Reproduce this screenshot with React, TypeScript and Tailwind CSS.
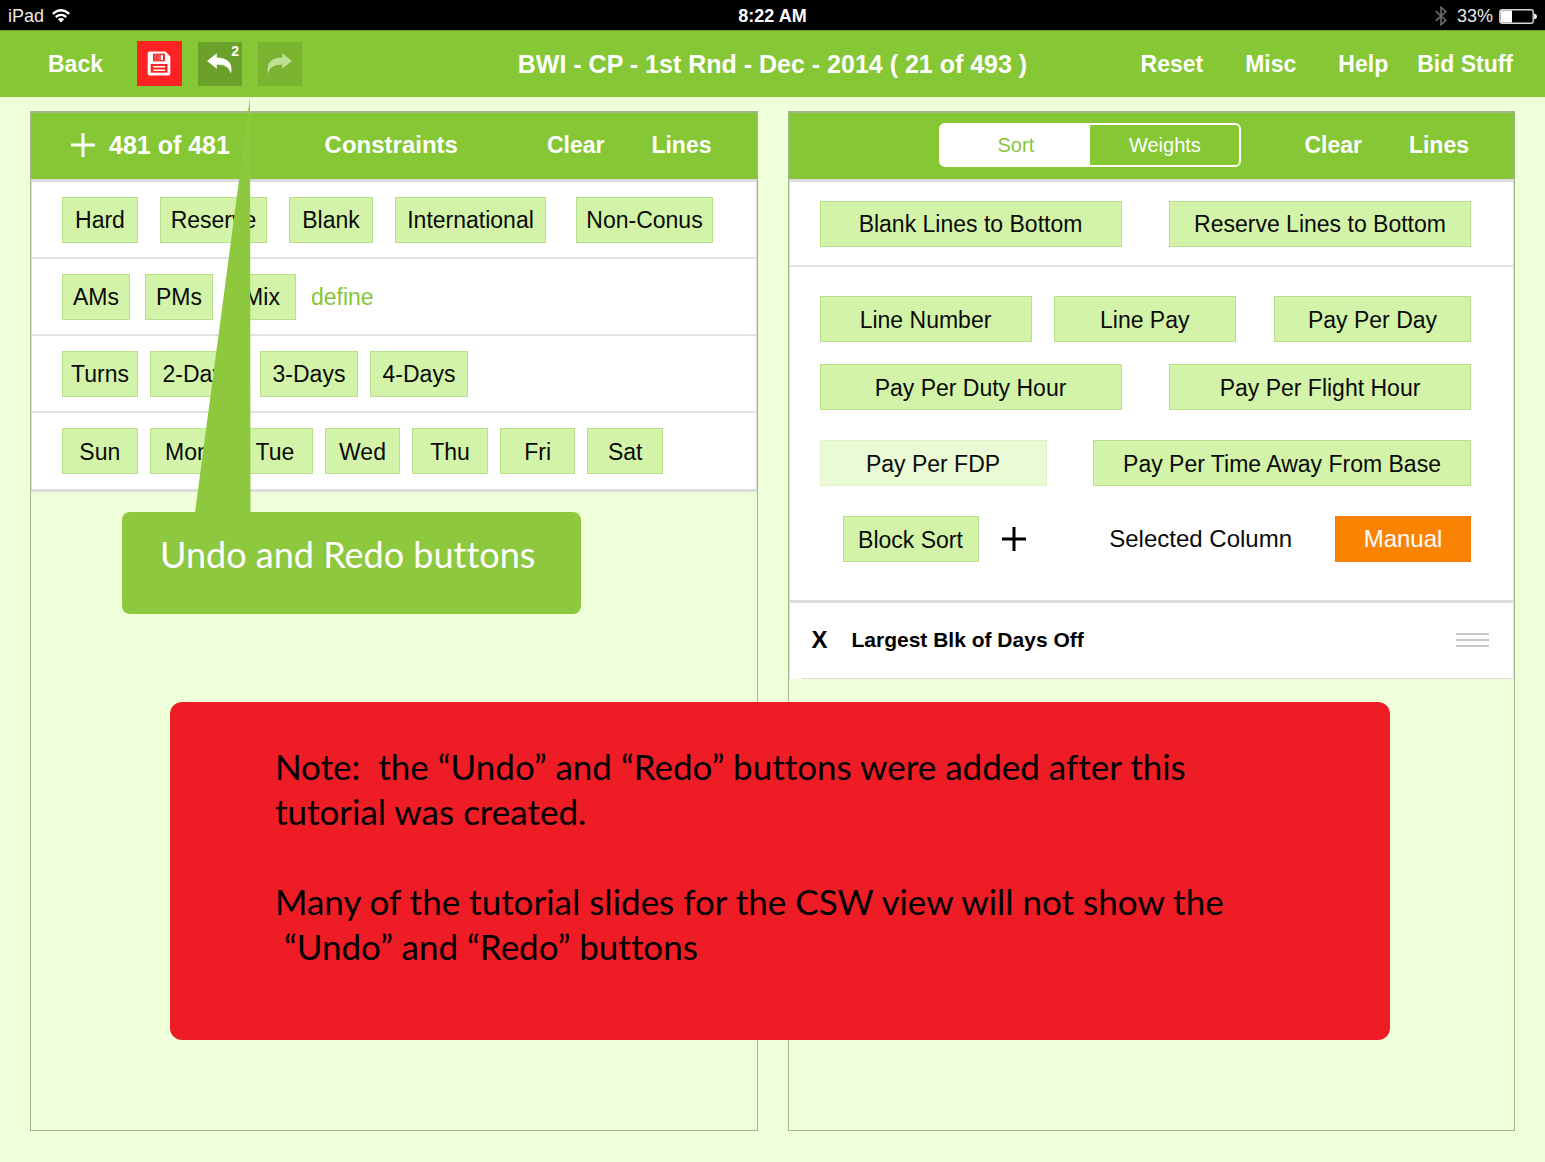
import React from "react";

const helv = "font-['Liberation_Sans',Arial,sans-serif]";

function Chip({ children, className = "" }: { children: React.ReactNode; className?: string }) {
  return (
    <button
      type="button"
      className={`h-[46px] shrink-0 whitespace-nowrap border border-[#b9df8d] bg-[#d3f4a8] pt-0.5 text-center text-[23px] leading-none text-[#0a0a0a] ${className}`}
    >
      {children}
    </button>
  );
}

function TextButton({ children, className = "" }: { children: React.ReactNode; className?: string }) {
  return (
    <button type="button" className={`whitespace-nowrap text-[23px] font-bold leading-7 text-white ${className}`}>
      {children}
    </button>
  );
}

function Plus({ className = "" }: { className?: string }) {
  return (
    <svg viewBox="0 0 24 24" className={`size-6 ${className}`} stroke="currentColor" strokeWidth="3" fill="none" aria-hidden="true">
      <path d="M12 0V24M0 12H24" />
    </svg>
  );
}

function StatusBar() {
  return (
    <div className="grid h-[30px] grid-cols-3 items-center bg-black px-2 pt-0.5 text-lg leading-none text-[#e8e8e8]">
      <div className="flex items-center gap-2">
        <span>iPad</span>
        <svg viewBox="0 0 18 14" className="h-3.5 w-[18px]" fill="none" stroke="#fff" aria-hidden="true">
          <path d="M.8 4.8Q9-2.2 17.2 4.8" strokeWidth="2.4" />
          <path d="M3.7 8Q9 3.7 14.3 8" strokeWidth="2.3" />
          <path d="M5.8 10.3Q9 7.7 12.2 10.3L9 13.6Z" fill="#fff" stroke="none" />
        </svg>
      </div>
      <div className="text-center font-bold text-white">8:22 AM</div>
      <div className="flex items-center justify-end gap-1.5">
        <svg viewBox="0 0 12 20" className="mr-1 h-5 w-3" fill="none" stroke="#6b6b6b" strokeWidth="1.6" aria-hidden="true">
          <path d="M.8 5.2 10.8 14.4 6 18.8V1.2L10.8 5.6.8 14.8" />
        </svg>
        <span>33%</span>
        <svg viewBox="0 0 38 15" className="h-[15px] w-[38px]" aria-hidden="true">
          <rect x=".8" y=".8" width="33.4" height="13.4" rx="2" fill="none" stroke="#d8d8d8" strokeWidth="1.4" />
          <rect x="1.5" y="1.5" width="11.5" height="12" fill="#fff" />
          <path d="M35.2 4.5Q38 5.2 38 7.5T35.2 10.5Z" fill="#fff" />
        </svg>
      </div>
    </div>
  );
}

function SaveIcon() {
  return (
    <svg viewBox="0 0 24 25" className="h-[25px] w-6" aria-hidden="true">
      <path d="M2.500.5H18.500L23.300 5.500V22.500a2 2 0 0 1-2 2H2.700a2 2 0 0 1-2-2V2.500a2 2 0 0 1 1.800-2Z" fill="#fff" />
      <rect x="6.700" y="3.300" width="10.600" height="6.400" fill="none" stroke="#ff2222" strokeWidth="1.300" />
      <rect x="7" y="3.500" width="5.500" height="6" fill="#f04a4a" />
      <rect x="12.500" y="3.500" width="1.200" height="6" fill="#ff2222" />
      <rect x="16" y="3.500" width="1.200" height="6" fill="#ff2222" />
      <rect x="3.700" y="13" width="16.800" height="8.700" fill="#ff2222" />
      <path d="M6.300 15.700H18M6.300 19.200H18" stroke="#fff" strokeWidth="1.500" />
    </svg>
  );
}

function ArrowIcon({ className = "" }: { className?: string }) {
  return (
    <svg viewBox="0 0 25 21" className={`h-[21px] w-[25px] ${className}`} fill="currentColor" aria-hidden="true">
      <path d="M0 8 9.8.2V4.6C18.5 4.6 24.5 8.6 24.5 16.2c0 1.6-.3 3-.9 4.6C23 14.500 17.500 11.500 9.800 11.500V15.800Z" />
    </svg>
  );
}

function NavBar() {
  return (
    <nav className="grid h-[67px] grid-cols-[1fr_auto_1fr] items-center border-t border-[#6a9e28] bg-[#86c735] px-8 pb-px">
      <div className="flex items-center pl-4">
        <TextButton>Back</TextButton>
        <button type="button" aria-label="Save" className="ml-[34px] flex size-[45px] items-center justify-center bg-[#ff2222]">
          <SaveIcon />
        </button>
        <button type="button" aria-label="Undo" className="relative ml-4 flex size-11 items-center justify-center bg-[#6ba12b] text-white">
          <ArrowIcon />
          <span className="absolute right-[3px] top-0.5 text-sm font-bold leading-none">2</span>
        </button>
        <button type="button" aria-label="Redo" disabled className="ml-4 flex size-11 items-center justify-center bg-[#7ab431] text-[#bfe094]">
          <ArrowIcon className="-scale-x-100" />
        </button>
      </div>
      <h1 className="whitespace-nowrap text-[25px] font-bold leading-7 text-white">BWI - CP - 1st Rnd - Dec - 2014 ( 21 of 493 )</h1>
      <div className="flex items-center justify-end">
        <TextButton>Reset</TextButton>
        <TextButton className="ml-[42px]">Misc</TextButton>
        <TextButton className="ml-[42px]">Help</TextButton>
        <TextButton className="ml-[29px]">Bid Stuff</TextButton>
      </div>
    </nav>
  );
}

const panel = "flex min-w-0 flex-1 flex-col border border-t-2 border-[#a3b78c]";
const panelHead = "h-[66px] items-center bg-[#86c735] pb-0.5 pr-[45px]";
const row = "flex h-[77px] items-center border-b-2 border-[#e2e2e2] pl-[30px]";

function ConstraintsPanel() {
  return (
    <section className={panel}>
      <header className={`${panelHead} grid grid-cols-[1fr_auto_1fr] pl-10 text-white`}>
        <div className="flex items-center gap-3.5">
          <button type="button" aria-label="Add constraint"><Plus className="block" /></button>
          <span className="text-[25px] font-bold leading-7">481 of 481</span>
        </div>
        <h2 className="text-2xl font-bold leading-7">Constraints</h2>
        <div className="flex justify-end gap-[47px]">
          <TextButton>Clear</TextButton>
          <TextButton>Lines</TextButton>
        </div>
      </header>
      <div className="border-x border-y-[3px] border-[#dcdcdc] bg-white">
        <div className={row}>
          <Chip className="w-[76px]">Hard</Chip>
          <Chip className="ml-[22px] w-[107px]">Reserve</Chip>
          <Chip className="ml-[22px] w-[84px]">Blank</Chip>
          <Chip className="ml-[22px] w-[151px]">International</Chip>
          <Chip className="ml-[30px] w-[137px]">Non-Conus</Chip>
        </div>
        <div className={`${row} gap-[15px]`}>
          <Chip className="w-[68px]">AMs</Chip>
          <Chip className="w-[68px]">PMs</Chip>
          <Chip className="w-[68px]">Mix</Chip>
          <a href="#define" className="pt-0.5 text-[23px] leading-none text-[#86c735]">define</a>
        </div>
        <div className={`${row} gap-3`}>
          <Chip className="w-[76px]">Turns</Chip>
          <Chip className="w-[98px]">2-Days</Chip>
          <Chip className="w-[98px]">3-Days</Chip>
          <Chip className="w-[98px]">4-Days</Chip>
        </div>
        <div className="flex h-[76px] items-center pl-[30px]">
          <div className="grid w-[601px] grid-cols-7 gap-3">
            {["Sun", "Mon", "Tue", "Wed", "Thu", "Fri", "Sat"].map((d) => (
              <Chip key={d}>{d}</Chip>
            ))}
          </div>
        </div>
      </div>
    </section>
  );
}

function SortPanel() {
  return (
    <section className={panel}>
      <header className={`${panelHead} flex justify-end`}>
        <div className="flex h-11 w-[302px] overflow-hidden rounded-md border-2 border-white text-xl leading-none" role="group" aria-label="View">
          <button type="button" className="flex-1 bg-white text-[#86c735]">Sort</button>
          <button type="button" className="flex-1 bg-[#86c735] text-white">Weights</button>
        </div>
        <TextButton className="ml-[63px]">Clear</TextButton>
        <TextButton className="ml-[47px]">Lines</TextButton>
      </header>
      <div className="border-x border-t-[3px] border-[#dcdcdc] bg-white">
        <div className="flex h-[85px] items-center justify-between border-b-2 border-[#e2e2e2] pl-[30px] pr-[42px]">
          <Chip className="w-[302px]">Blank Lines to Bottom</Chip>
          <Chip className="w-[302px]">Reserve Lines to Bottom</Chip>
        </div>
        <div className="border-b-[3px] border-[#dcdcdc] pb-[38px] pl-[30px] pr-[42px] pt-[29px]">
          <div className="flex justify-between">
            <Chip className="w-[212px]">Line Number</Chip>
            <Chip className="-ml-4 w-[182px]">Line Pay</Chip>
            <Chip className="w-[197px]">Pay Per Day</Chip>
          </div>
          <div className="mt-[22px] flex justify-between">
            <Chip className="w-[302px]">Pay Per Duty Hour</Chip>
            <Chip className="w-[302px]">Pay Per Flight Hour</Chip>
          </div>
          <div className="mt-[30px] flex justify-between">
            <button type="button" disabled className="h-[46px] w-[227px] border border-[#ddf3c4] bg-[#e9fad4] pt-0.5 text-[23px] leading-none text-[#0a0a0a]">
              Pay Per FDP
            </button>
            <Chip className="w-[378px]">Pay Per Time Away From Base</Chip>
          </div>
          <div className="mt-[30px] flex items-center pl-[23px]">
            <Chip className="w-[136px]">Block Sort</Chip>
            <button type="button" aria-label="Add block sort" className="ml-[23px] text-black"><Plus className="block" /></button>
            <span className="ml-auto mr-[43px] text-2xl leading-none text-[#0a0a0a]">Selected Column</span>
            <button type="button" className="h-[46px] w-[136px] border border-[#f57c0a] bg-[#fb8304] text-2xl leading-none text-white">Manual</button>
          </div>
        </div>
        <div className="flex h-[75px] items-center pb-0.5 pl-[22px] pr-6">
          <button type="button" aria-label="Remove" className="w-4 text-2xl font-bold leading-none text-black">X</button>
          <span className="ml-6 text-[21px] font-bold leading-none text-black">Largest Blk of Days Off</span>
          <svg viewBox="0 0 33 14" className="ml-auto h-3.5 w-[33px]" stroke="#c7c7cc" strokeWidth="2" aria-hidden="true">
            <path d="M0 1H33M0 7H33M0 13H33" />
          </svg>
        </div>
        <div className="ml-3 h-px bg-[#dcdcdc]" />
      </div>
    </section>
  );
}

function UndoRedoCallout() {
  return (
    <aside className="absolute left-[122px] top-[97px] w-[459px] font-[Lato,sans-serif]">
      <svg viewBox="0 0 459 416" className="block h-[416px] w-[459px]" fill="#8dc83f" aria-hidden="true">
        <path d="M128 0 128.500 416H73Z" />
      </svg>
      <div className="-mt-px h-[102px] rounded-lg bg-[#8dc83f] pl-[38px] pt-[18px] text-4xl leading-[48px] text-white [font-variant-ligatures:none]">
        Undo and Redo buttons
      </div>
    </aside>
  );
}

function Note() {
  return (
    <aside className="absolute left-[11%] top-[702px] w-[79%] whitespace-pre rounded-xl bg-[#ee1c25] pb-[71px] pl-[105px] pt-[42px] font-[Lato,sans-serif] text-[35px] leading-[45px] text-black [font-variant-ligatures:none]">
      <p>Note:  the “Undo” and “Redo” buttons were added after this{"\n"}tutorial was created.</p>
      <p className="mt-[45px]">Many of the tutorial slides for the CSW view will not show the{"\n"} “Undo” and “Redo” buttons</p>
    </aside>
  );
}

export default function App() {
  return (
    <div className={`relative flex min-h-screen flex-col bg-[#eeffd9] ${helv}`}>
      <StatusBar />
      <NavBar />
      <main className="flex flex-1 gap-[30px] px-[30px] pb-[31px] pt-3.5">
        <ConstraintsPanel />
        <SortPanel />
      </main>
      <UndoRedoCallout />
      <Note />
    </div>
  );
}
